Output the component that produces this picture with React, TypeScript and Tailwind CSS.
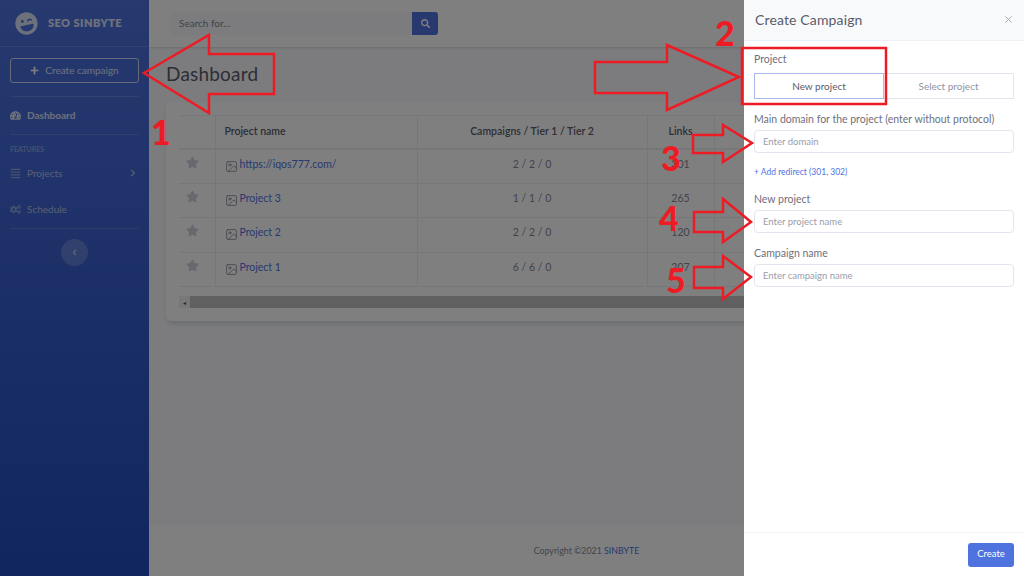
import { Image as ImageIcon, X } from "lucide-react"
import { FaAlignJustify, FaChevronLeft, FaChevronRight, FaCogs, FaLaughWink, FaPlus, FaSearch, FaStar, FaTachometerAlt } from "react-icons/fa"

const projects = [
  { name: "https://iqos777.com/", stats: "2 / 2 / 0", links: "301" },
  { name: "Project 3", stats: "1 / 1 / 0", links: "265" },
  { name: "Project 2", stats: "2 / 2 / 0", links: "120" },
  { name: "Project 1", stats: "6 / 6 / 0", links: "207" },
]

const arrows = [
  "144,73 209,35 209,54 274,54 274,94 209,94 209,113",
  "595,62 667,62 667,45 739,77 667,110 667,93 595,93",
  "693,135 723,135 723,125 752,143 723,162 723,153 693,153",
  "694,212 723,212 723,199 751,222 723,242 723,232 694,232",
  "694,267 723,267 723,256 751,277 723,299 723,288 694,288",
]

function Sidebar() {
  return (
    <aside className="flex w-[149px] shrink-0 flex-col bg-gradient-to-b from-[#4e73df] to-[#224abe] px-[10px] text-white/80">
      <div className="-mx-[10px] flex h-[47px] items-center border-b border-white/15 pl-[15px]">
        <FaLaughWink className="-rotate-12 text-[23px]" />
        <span className="ml-[10px] text-[11px] font-extrabold tracking-[0.04em]">SEO SINBYTE</span>
      </div>
      <button className="mt-[11px] flex h-[25px] items-center justify-center gap-[6px] rounded-[3px] border border-white/70 text-[10px]">
        <FaPlus className="text-[9px] text-white" />
        Create campaign
      </button>
      <div className="mt-[13px] flex h-[38px] items-center gap-[6px] border-t border-white/15 text-[10px] font-bold">
        <FaTachometerAlt className="text-[11px]" />
        Dashboard
      </div>
      <div className="flex h-[20px] items-end border-t border-white/15 text-[7px] font-bold text-white/40">FEATURES</div>
      <div className="mt-[1px] flex h-[36px] items-center gap-[6px] text-[10px] text-white/60">
        <FaAlignJustify className="text-[11px] text-white/40" />
        Projects
        <FaChevronRight className="ml-auto mr-[2px] text-[8px]" />
      </div>
      <div className="flex h-[36px] items-center gap-[6px] text-[10px] text-white/60">
        <FaCogs className="text-[11px] text-white/40" />
        Schedule
      </div>
      <div className="mt-[1px] border-t border-white/15" />
      <button className="mx-auto mt-[10px] flex size-[27px] items-center justify-center rounded-full bg-white/20">
        <FaChevronLeft className="text-[7px] text-white/60" />
      </button>
    </aside>
  )
}

function ProjectsTable() {
  return (
    <div className="mt-[16px] w-[860px] rounded-[5px] bg-white px-[13px] pb-[13px] pt-[13px] shadow-md">
      <table className="w-[834px] table-fixed border-collapse text-[10.5px] text-[#858796]">
        <colgroup>
          <col className="w-[36px]" />
          <col className="w-[202px]" />
          <col className="w-[230px]" />
          <col className="w-[67px]" />
          <col />
        </colgroup>
        <thead>
          <tr className="h-[33px] border-y border-b-2 border-[#eceef3] text-[#5a5c69]">
            <th />
            <th className="border-l border-[#eceef3] pl-[9px] text-left font-semibold">Project name</th>
            <th className="border-l border-[#eceef3] font-semibold">Campaigns / Tier 1 / Tier 2</th>
            <th className="border-l border-[#eceef3] font-semibold">Links</th>
            <th className="border-l border-[#eceef3]" />
          </tr>
        </thead>
        <tbody>
          {projects.map((p) => (
            <tr key={p.name} className="h-[34.5px] border-b border-[#eceef3]">
              <td className="pb-[3px] pr-[8px]">
                <FaStar className="mx-auto -mt-[5px] text-[13px] text-[#d0d3dc]" />
              </td>
              <td className="border-l border-[#eceef3] pb-[3px] pl-[9px]">
                <span className="flex items-center gap-[2px] text-[#4e73df]">
                  <ImageIcon className="mt-[3px] size-[13px] shrink-0 text-[#858796]" strokeWidth={1.5} />
                  {p.name}
                </span>
              </td>
              <td className="border-l border-[#eceef3] pb-[3px] text-center">{p.stats}</td>
              <td className="border-l border-[#eceef3] pb-[3px] text-center">{p.links}</td>
              <td className="border-l border-[#eceef3]" />
            </tr>
          ))}
        </tbody>
      </table>
      <div className="mt-[9px] flex h-[12px] bg-[#f1f1f1]">
        <div className="flex w-[11px] items-center justify-center text-[6px] text-[#505050]">◂</div>
        <div className="flex-1 bg-[#c1c1c1]" />
      </div>
    </div>
  )
}

function Field({ label, placeholder }: { label: string; placeholder: string }) {
  return (
    <div>
      <label className="block text-[10.5px] leading-[14px] text-[#6e707e]">{label}</label>
      <div className="mt-[4px] flex h-[23px] items-center rounded-[4px] border border-[#e3e6f0] pl-[8px] pt-[2px] text-[9.5px] text-[#9a9cab]">
        {placeholder}
      </div>
    </div>
  )
}

function CampaignDrawer() {
  return (
    <div className="absolute inset-y-0 right-0 flex w-[280px] flex-col bg-white">
      <div className="flex h-[41px] shrink-0 items-center justify-between border-b border-[#eef0f5] bg-[#f8f9fa] pb-[2px] pl-[11px] pr-[10px]">
        <h2 className="text-[14px] font-normal tracking-[0.01em] text-[#5a5c69]">Create Campaign</h2>
        <X className="size-[11px] text-[#a0a2ad]" strokeWidth={2} />
      </div>
      <div className="flex-1 px-[10px] pt-[11px]">
        <label className="block text-[10.5px] leading-[14px] text-[#6e707e]">Project</label>
        <div className="mt-[7px] flex h-[26px] text-[10px]">
          <div className="flex w-[130px] items-center justify-center border border-[#a9b9ec] text-[#5a5c69]">New project</div>
          <div className="flex w-[130px] items-center justify-center border border-l-0 border-[#e3e6f0] text-[#8f93a3]">Select project</div>
        </div>
        <div className="mt-[13px]">
          <Field label="Main domain for the project (enter without protocol)" placeholder="Enter domain" />
        </div>
        <div className="mt-[13px] text-[8.5px] leading-[12px] text-[#4e73df]">+ Add redirect (301, 302)</div>
        <div className="mt-[14px]">
          <Field label="New project" placeholder="Enter project name" />
        </div>
        <div className="mt-[13px]">
          <Field label="Campaign name" placeholder="Enter campaign name" />
        </div>
      </div>
      <div className="flex h-[44px] shrink-0 items-center justify-end border-t border-[#f3f4f8] pr-[10px]">
        <button className="flex h-[24px] w-[46px] items-center justify-center rounded-[3px] bg-[#4e73df] text-[9.5px] text-white">Create</button>
      </div>
    </div>
  )
}

function Annotations() {
  return (
    <>
      <svg className="pointer-events-none absolute inset-0" width="1024" height="576" fill="none" stroke="#ed1c24" strokeWidth="2.5">
        {arrows.map((points) => (
          <polygon key={points} points={points} />
        ))}
        <rect x="742" y="48" width="144" height="56" />
      </svg>
      <span className="absolute left-[151px] top-[112px] text-[34px] font-black leading-[40px] text-[#ed1c24]">1</span>
      <span className="absolute left-[715px] top-[13px] text-[34px] font-black leading-[40px] text-[#ed1c24]">2</span>
      <span className="absolute left-[661px] top-[138px] text-[34px] font-black leading-[40px] text-[#ed1c24]">3</span>
      <span className="absolute left-[659px] top-[198px] text-[34px] font-black leading-[40px] text-[#ed1c24]">4</span>
      <span className="absolute left-[666px] top-[260px] text-[34px] font-black leading-[40px] text-[#ed1c24]">5</span>
    </>
  )
}

export default function App() {
  return (
    <div className="relative flex h-[576px] w-[1024px] overflow-hidden font-['Lato','Noto_Sans',sans-serif]">
      <Sidebar />
      <main className="flex min-w-0 flex-1 flex-col bg-[#f8f9fc]">
        <header className="flex h-[47px] shrink-0 items-center bg-white pl-[21px] shadow">
          <div className="flex h-[23px] w-[242px] items-center rounded-l-[3px] bg-[#f8f9fc] pl-[9px] text-[10px] text-[#858796]">Search for...</div>
          <button className="flex h-[23px] w-[26px] items-center justify-center rounded-r-[3px] bg-[#4e73df]">
            <FaSearch className="text-[9px] text-white" />
          </button>
        </header>
        <div className="flex-1 pl-[17px] pt-[15px]">
          <h1 className="text-[19px] leading-[24px] tracking-[0.01em] text-[#5a5c69]">Dashboard</h1>
          <ProjectsTable />
        </div>
        <footer className="flex h-[51px] shrink-0 items-center justify-center bg-white text-[8.8px] text-[#858796]">
          <span>
            Copyright ©2021 <span className="text-[#4e73df]">SINBYTE</span>
          </span>
        </footer>
      </main>
      <div className="absolute inset-0 bg-black/50" />
      <CampaignDrawer />
      <Annotations />
    </div>
  )
}
